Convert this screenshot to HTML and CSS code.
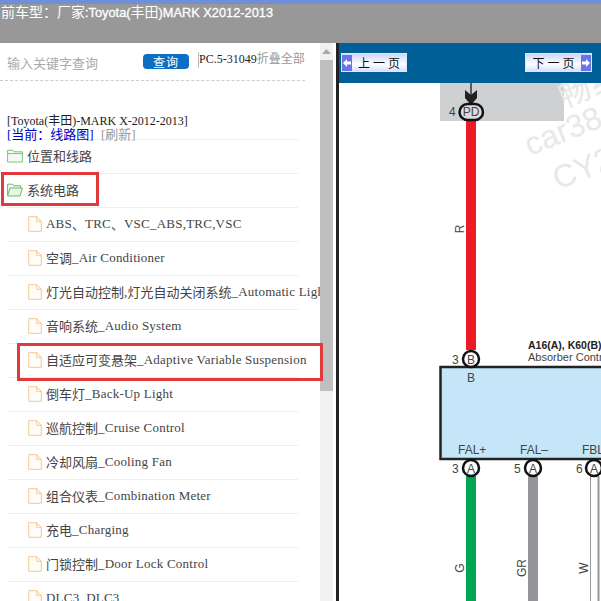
FILE: index.html
```html
<!DOCTYPE html>
<html lang="zh">
<head>
<meta charset="utf-8">
<title>MARK X 2012-2013</title>
<link rel="stylesheet" href="styles.css">
</head>
<body>
<header class="topbar"><span class="cartitle">前车型：厂家<span class="lat">:Toyota(</span>丰田<span class="lat">)MARK X2012-2013</span></span></header>
<main class="main">
  <aside class="side">
    <div class="tree">
      <div class="search">
        <span class="placeholder">输入关键字查询</span>
        <span class="btn">查询</span>
        <span class="pc">PC.5-31049<span class="muted">折叠全部</span></span>
      </div>
      <div class="crumb">
        <div>[Toyota(丰田)-MARK X-2012-2013]</div>
        <div class="current">[当前：线路图] <span class="muted refresh">[刷新]</span></div>
      </div>
      <ul class="list">
        <li class="row"><svg class="ico" viewBox="0 0 16 14"><path d="M.6 13V1.200h5l1.200 1.600h8.600V13z" fill="#f4fbf2" stroke="#7cc47a"/><path d="M.6 4.600h15" stroke="#7cc47a"/></svg>位置和线路</li>
        <li class="row"><svg class="ico" viewBox="0 0 16 14"><path d="M.6 13V1.200h5l1.200 1.600h7V5" fill="#f4fbf2" stroke="#6cb96a"/><path d="M.6 13l2.400-8h12.400l-2.400 8z" fill="#eaf6e6" stroke="#6cb96a"/></svg>系统电路</li>
        <li class="row sub"><svg class="doc" viewBox="0 0 14 16"><path d="M.7.700h8l4.600 4.600v10H.7z" fill="#fffdf8" stroke="#f1c998"/><path d="M8.700.700v4.600h4.600" fill="none" stroke="#f1c998"/></svg><span class="en">ABS</span>、<span class="en">TRC</span>、<span class="en">VSC_ABS,TRC,VSC</span></li>
        <li class="row sub"><svg class="doc" viewBox="0 0 14 16"><path d="M.7.700h8l4.600 4.600v10H.7z" fill="#fffdf8" stroke="#f1c998"/><path d="M8.700.700v4.600h4.600" fill="none" stroke="#f1c998"/></svg>空调<span class="en">_Air Conditioner</span></li>
        <li class="row sub"><svg class="doc" viewBox="0 0 14 16"><path d="M.7.700h8l4.600 4.600v10H.7z" fill="#fffdf8" stroke="#f1c998"/><path d="M8.700.700v4.600h4.600" fill="none" stroke="#f1c998"/></svg>灯光自动控制<span class="en">,</span>灯光自动关闭系统<span class="en">_Automatic Light Control</span></li>
        <li class="row sub"><svg class="doc" viewBox="0 0 14 16"><path d="M.7.700h8l4.600 4.600v10H.7z" fill="#fffdf8" stroke="#f1c998"/><path d="M8.700.700v4.600h4.600" fill="none" stroke="#f1c998"/></svg>音响系统<span class="en">_Audio System</span></li>
        <li class="row sub"><svg class="doc" viewBox="0 0 14 16"><path d="M.7.700h8l4.600 4.600v10H.7z" fill="#fffdf8" stroke="#f1c998"/><path d="M8.700.700v4.600h4.600" fill="none" stroke="#f1c998"/></svg>自适应可变悬架<span class="en">_Adaptive Variable Suspension</span></li>
        <li class="row sub"><svg class="doc" viewBox="0 0 14 16"><path d="M.7.700h8l4.600 4.600v10H.7z" fill="#fffdf8" stroke="#f1c998"/><path d="M8.700.700v4.600h4.600" fill="none" stroke="#f1c998"/></svg>倒车灯<span class="en">_Back-Up Light</span></li>
        <li class="row sub"><svg class="doc" viewBox="0 0 14 16"><path d="M.7.700h8l4.600 4.600v10H.7z" fill="#fffdf8" stroke="#f1c998"/><path d="M8.700.700v4.600h4.600" fill="none" stroke="#f1c998"/></svg>巡航控制<span class="en">_Cruise Control</span></li>
        <li class="row sub"><svg class="doc" viewBox="0 0 14 16"><path d="M.7.700h8l4.600 4.600v10H.7z" fill="#fffdf8" stroke="#f1c998"/><path d="M8.700.700v4.600h4.600" fill="none" stroke="#f1c998"/></svg>冷却风扇<span class="en">_Cooling Fan</span></li>
        <li class="row sub"><svg class="doc" viewBox="0 0 14 16"><path d="M.7.700h8l4.600 4.600v10H.7z" fill="#fffdf8" stroke="#f1c998"/><path d="M8.700.700v4.600h4.600" fill="none" stroke="#f1c998"/></svg>组合仪表<span class="en">_Combination Meter</span></li>
        <li class="row sub"><svg class="doc" viewBox="0 0 14 16"><path d="M.7.700h8l4.600 4.600v10H.7z" fill="#fffdf8" stroke="#f1c998"/><path d="M8.700.700v4.600h4.600" fill="none" stroke="#f1c998"/></svg>充电<span class="en">_Charging</span></li>
        <li class="row sub"><svg class="doc" viewBox="0 0 14 16"><path d="M.7.700h8l4.600 4.600v10H.7z" fill="#fffdf8" stroke="#f1c998"/><path d="M8.700.700v4.600h4.600" fill="none" stroke="#f1c998"/></svg>门锁控制<span class="en">_Door Lock Control</span></li>
        <li class="row sub"><svg class="doc" viewBox="0 0 14 16"><path d="M.7.700h8l4.600 4.600v10H.7z" fill="#fffdf8" stroke="#f1c998"/><path d="M8.700.700v4.600h4.600" fill="none" stroke="#f1c998"/></svg><span class="en">DLC3_DLC3</span></li>
      </ul>
    </div>
    <div class="scroll"><div class="scroll-btn"><svg viewBox="0 0 9 5" class="arrow"><path d="M0 5L4.500 0 9 5z" fill="#a8a8a8"/></svg></div><div class="thumb"></div></div>
    <div class="mark mark-sys"></div>
    <div class="mark mark-ads"></div>
  </aside>
  <section class="view">
    <div class="pager">
      <span class="pg"><svg class="pg-arrow" viewBox="0 0 10 16"><rect width="10" height="16" fill="#6b73e8"/><path d="M1 8l4-4v2.500h4v3H5V12z" fill="#fff"/></svg><span class="pg-text">上一页</span></span>
      <span class="pg pg-next"><span class="pg-text">下一页</span><svg class="pg-arrow" viewBox="0 0 10 16"><rect width="10" height="16" fill="#6b73e8"/><path d="M9 8L5 4v2.500H1v3h4V12z" fill="#fff"/></svg></span>
    </div>
    <svg class="diagram" viewBox="339 83 262 518" width="262" height="518">
      <rect x="440" y="83" width="124" height="38" fill="#cfd0d2"/>
      <g class="wm"><text transform="translate(564 108) rotate(-22)">畅纟</text><text transform="translate(530 156) rotate(-22)">car38</text><text transform="translate(558 190) rotate(-22)">CY2</text></g>
      <path d="M471 83v12" stroke="#333" stroke-width="1.500"/>
      <path d="M465 90l6 5 6-5v8l-6 7-6-7z" fill="#222"/>
      <rect x="466" y="120" width="10" height="230" fill="#ed1c24"/>
      <rect x="466" y="476" width="10" height="125" fill="#00a651"/>
      <rect x="528" y="476" width="10" height="125" fill="#939598"/>
      <path d="M590.500 476v125" stroke="#999"/><path d="M598.500 476v125" stroke="#999" stroke-width="2"/>
      <rect x="440.500" y="367" width="170" height="92" fill="#c4e6f8" stroke="#222" stroke-width="2.500"/>
      <rect x="459.500" y="104" width="23.500" height="16" rx="8" fill="#dcdcdc" stroke="#111" stroke-width="2.500"/>
      <g fill="#fff" stroke="#111" stroke-width="2.500"><circle cx="471" cy="359" r="8"/><circle cx="471" cy="468" r="8"/><circle cx="533" cy="468" r="8"/><circle cx="594" cy="468" r="8"/></g>
      <g class="lbl">
        <text x="449" y="116" class="s">4</text>
        <text x="471" y="116" text-anchor="middle" class="s">PD</text>
        <text x="452" y="364" class="s">3</text><text x="471" y="364" text-anchor="middle" class="s">B</text>
        <text x="471" y="382" text-anchor="middle">B</text>
        <text x="458" y="454">FAL+</text><text x="520" y="454">FAL–</text><text x="582" y="454">FBL</text>
        <text x="452" y="473" class="s">3</text><text x="471" y="473" text-anchor="middle" class="s">A</text>
        <text x="514" y="473" class="s">5</text><text x="533" y="473" text-anchor="middle" class="s">A</text>
        <text x="576" y="473" class="s">6</text><text x="594" y="473" text-anchor="middle" class="s">A</text>
        <text transform="translate(464 229) rotate(-90)" text-anchor="middle">R</text>
        <text transform="translate(464 568) rotate(-90)" text-anchor="middle">G</text>
        <text transform="translate(526 568) rotate(-90)" text-anchor="middle">GR</text>
        <text transform="translate(588 568) rotate(-90)" text-anchor="middle">W</text>
        <text x="528" y="349" class="b">A16(A), K60(B)</text>
        <text x="528" y="361" class="t">Absorber Control</text>
      </g>
    </svg>
  </section>
</main>
</body>
</html>
```
FILE: styles.css
```css
* { box-sizing: border-box; }
html, body { margin: 0; padding: 0; width: 601px; height: 601px; overflow: hidden; background: #fff; }
body { display: flex; flex-direction: column; font-family: "Liberation Serif", "Noto Sans CJK SC", serif; color: #333; }

.topbar { flex: 0 0 43px; background: #989898; border-top: 4px solid #6f8fd8; color: #fff; font: 14px/18px "Liberation Sans", "Noto Sans CJK SC", sans-serif; padding-left: 1px; white-space: nowrap; }
.cartitle { display: block; margin-top: -1px; }
.lat { font-size: 12.800px; -webkit-text-stroke: .3px #fff; }

.main { flex: 1; display: flex; min-height: 0; }
.side { position: relative; flex: 0 0 336px; display: flex; background: #fff; }
.tree { flex: 0 0 320px; width: 320px; overflow: hidden; }

.search { position: relative; height: 38px; margin: 0 15px 0 0; border-bottom: 1px dashed #ccc; display: flex; align-items: flex-start; padding-left: 7px; }
.placeholder { margin-top: 11px; width: 136px; font: 13px/18px "Noto Sans CJK SC", sans-serif; color: #aaa; }
.btn { margin-top: 11px; width: 46px; height: 15px; border-radius: 4px; background: #0d6fc4; color: #fff; font: 12px/15px "Noto Sans CJK SC", sans-serif; text-align: center; letter-spacing: 1px; }
.pc { margin: 9px 0 0 9px; height: 16px; border-left: 1px solid #bbb; font-size: 12px; line-height: 14px; white-space: nowrap; color: #222; }
.muted { color: #999; }

.crumb { margin-top: 34px; padding-left: 7px; font-size: 12px; line-height: 12px; color: #222; height: 24px; }
.current { color: #0000c0; font-size: 13px; line-height: 13px; padding-top: 1px; }
.refresh { margin-left: 4px; }

.list { list-style: none; margin: 0; padding: 0; }
.row { height: 34px; width: 291px; margin-left: 7px; padding-bottom: 2px; border-top: 1px solid #eee; display: flex; align-items: center; font-size: 13px; white-space: nowrap; color: #444; }
.en { letter-spacing: .23px; }
.sub { padding-left: 21px; }
.ico { width: 16px; height: 14px; flex: none; margin-right: 4px; }
.doc { width: 14px; height: 16px; flex: none; margin-right: 4px; }

.scroll { flex: 0 0 13px; margin-right: 3px; background: #f1f1f1; display: flex; flex-direction: column; }
.scroll-btn { height: 17px; display: flex; align-items: center; justify-content: center; }
.arrow { width: 9px; height: 5px; }
.thumb { height: 331px; background: #bfbfbf; }

.mark { position: absolute; border: 3px solid #e03a3c; }
.mark-sys { left: 1px; top: 129px; width: 98px; height: 34px; }
.mark-ads { left: 17px; top: 300px; width: 306px; height: 38px; }

.view { flex: 1; display: flex; flex-direction: column; border-left: 3px solid #222; min-width: 0; }
.pager { flex: 0 0 40px; background: #005f96; display: flex; justify-content: space-between; align-items: flex-start; padding: 10px 9px 0 2px; }
.pg { width: 66px; height: 19px; display: flex; align-items: center; border: 1px solid #dfe6ff; background: linear-gradient(#cfd6f8, #fff 60%, #d8defa); color: #111; font: 12px/16px "Noto Sans CJK SC", sans-serif; }
.pg-next { width: 67px; }
.pg-arrow { width: 10px; height: 16px; flex: none; }
.pg-text { flex: 1; text-align: center; letter-spacing: 3px; padding-left: 3px; }
.diagram { display: block; flex: none; }
.wm text { font: 32px "Liberation Sans", "Noto Sans CJK SC", sans-serif; fill: #e8e8e8; }
.lbl text { font: 12px "Liberation Sans", sans-serif; fill: #444; }
.lbl .b { font-weight: 700; font-size: 10.500px; fill: #222; }
.lbl .t { font-size: 11px; }
```
